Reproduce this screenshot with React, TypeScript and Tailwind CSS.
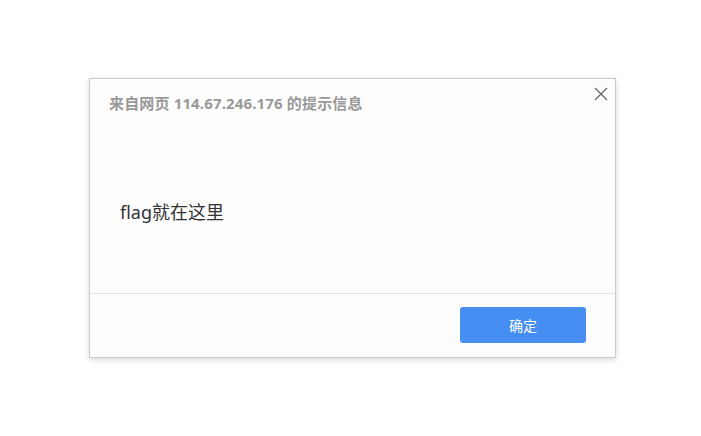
import React from "react";

export default function App() {
  return (
    <div className="w-[701px] h-[436px] bg-white pt-[78px] pl-[89px] font-['Noto_Sans','Noto_Sans_CJK_SC',sans-serif]">
      <div className="w-[527px] h-[280px] border border-[#cacaca] bg-[#fdfdfd] shadow-[0_2px_6px_rgba(0,0,0,0.15)] flex flex-col">
        <div className="flex items-start justify-between pt-[14px] pl-[19px] pr-[7px]">
          <span className="text-[15px] leading-[20px] font-bold tracking-[0.15px] text-[#999999]">
            来自网页 114.67.246.176 的提示信息
          </span>
          <svg className="mt-[-6px]" width="14" height="14" viewBox="0 0 14 14">
            <path d="M1 1 L13 13 M13 1 L1 13" stroke="#666" strokeWidth="1.3" fill="none" />
          </svg>
        </div>
        <div className="flex-1 pl-[30px] pt-[87px] text-[18px] leading-[24px] text-[#333333]">
          flag就在这里
        </div>
        <div className="border-t border-[#e2e2e2] h-[64px] flex items-start justify-end pt-[13px] pr-[29px]">
          <button className="w-[126px] h-[36px] rounded-[3px] bg-[#468ef2] text-white text-[14px] font-['Noto_Sans_CJK_SC',sans-serif]">
            确定
          </button>
        </div>
      </div>
    </div>
  );
}
